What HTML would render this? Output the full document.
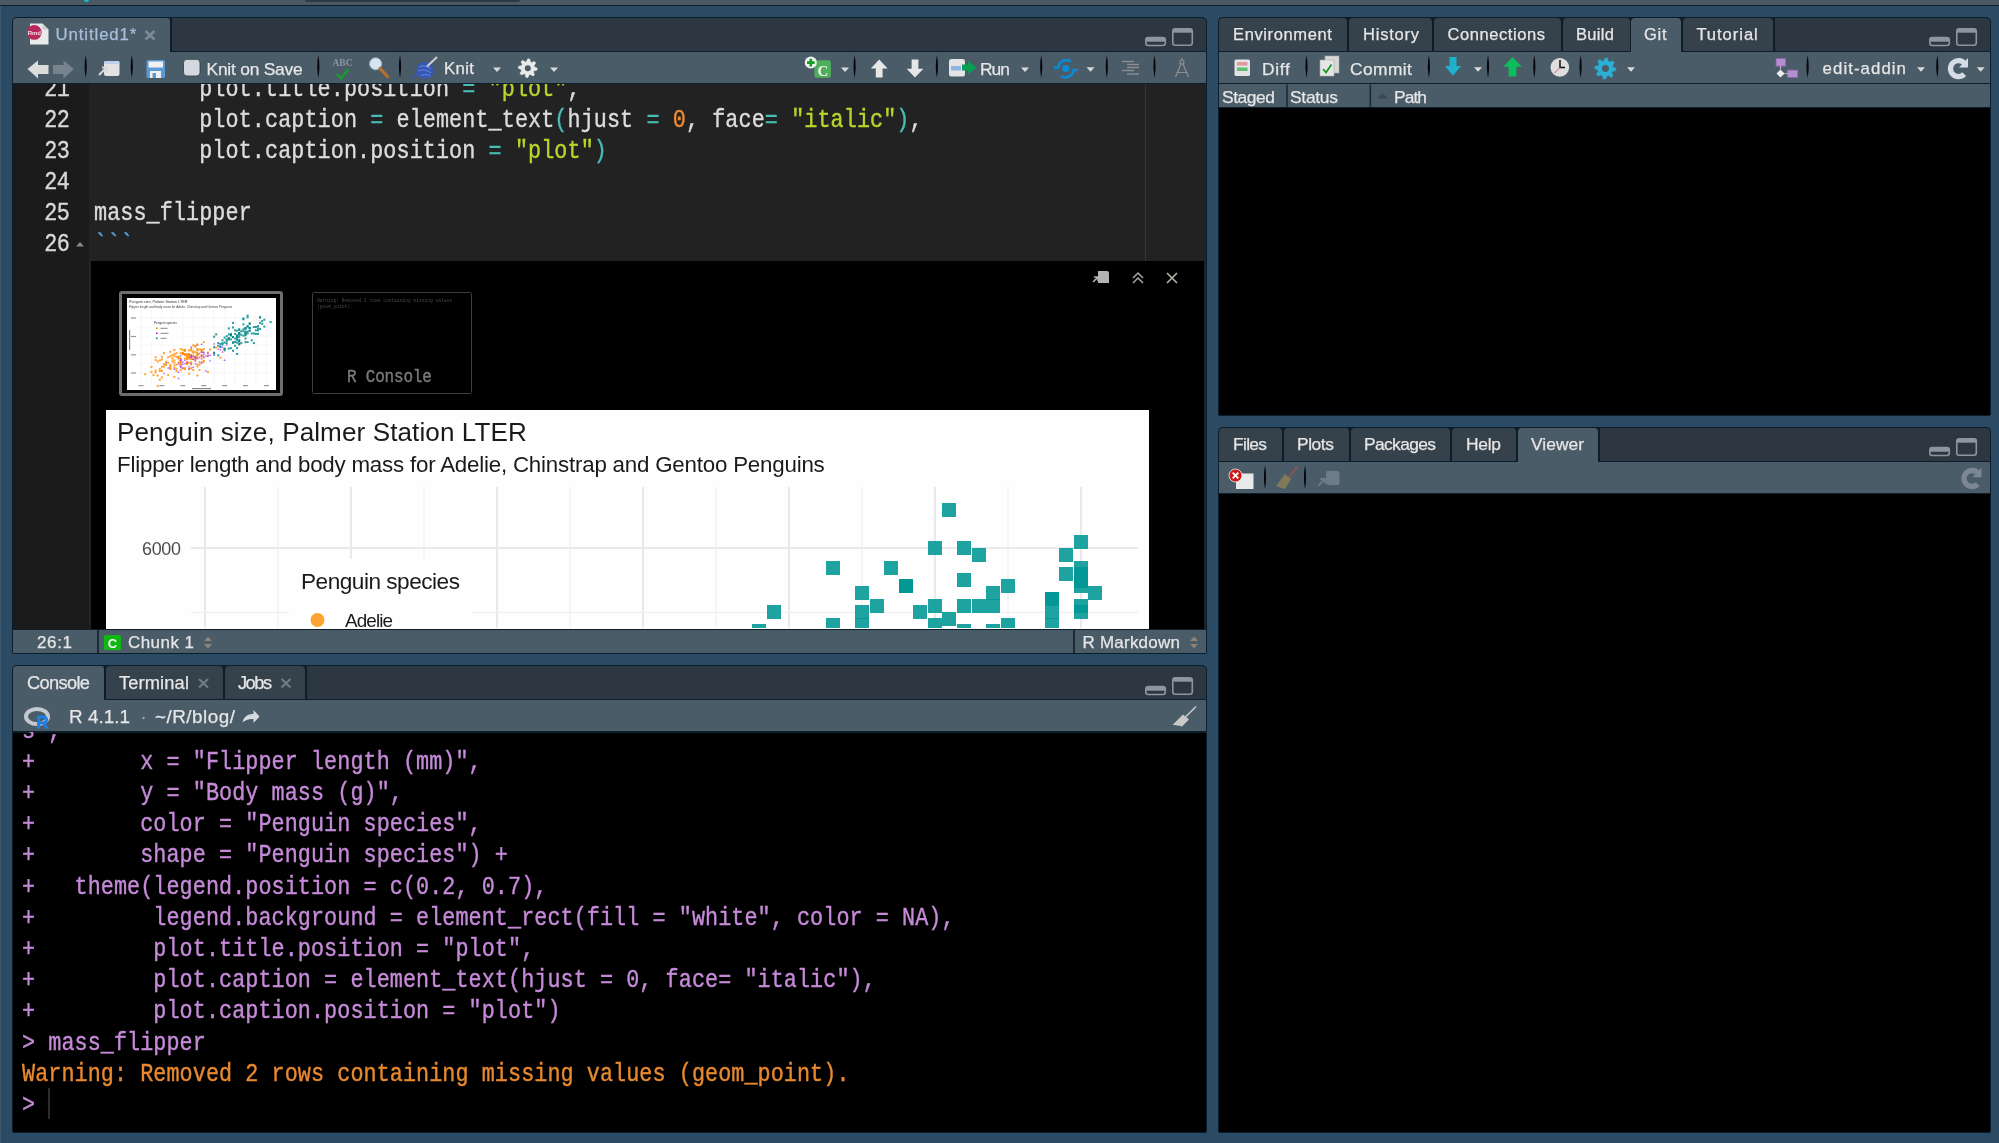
<!DOCTYPE html><html><head><meta charset="utf-8"><style>
*{margin:0;padding:0;box-sizing:border-box}
html,body{width:1999px;height:1143px;overflow:hidden;background:#2b4a63;font-family:"Liberation Sans",sans-serif;color:#e6e6e6}
.a{position:absolute}
.ui{font-size:16.5px;white-space:pre;line-height:20px}
.mono{font-family:"Liberation Mono",monospace;white-space:pre;-webkit-text-stroke:0.35px currentColor}
.sep{position:absolute;width:2px;background:#0d1a24;border-radius:1px}
.dd{position:absolute;width:0;height:0;border-left:4px solid transparent;border-right:4px solid transparent;border-top:4px solid #d8d8d8}
</style></head><body><div class="a" style="left:0;top:0;width:1999px;height:1143px;overflow:hidden;will-change:transform;background:#2b4a63"><div class="a" style="left:0px;top:6px;width:1px;height:1137px;background:#3d5a70;"></div>
<div class="a" style="left:0px;top:0px;width:1999px;height:5px;background:#4b5965;"></div>
<div class="a" style="left:0px;top:5px;width:1999px;height:1px;background:#0e1c28;"></div>
<div class="a" style="left:305px;top:0px;width:215px;height:1.5px;background:#2c3a46;border-radius:0 0 4px 4px"></div>
<div class="a" style="left:84px;top:0px;width:5px;height:1.5px;background:#22b5c8;border-radius:0 0 3px 3px"></div>
<div class="a" style="left:12px;top:17px;width:1195px;height:637px;background:#0c1d2c;border-radius:5px 5px 2px 2px"></div>
<div class="a" style="left:13px;top:18px;width:1193px;height:34px;background:#2d3741;border-radius:4px 4px 0 0"></div>
<div class="a" style="left:170px;top:18px;width:2px;height:34px;background:#0c1d2c;"></div>
<div class="a" style="left:13px;top:18px;width:157px;height:34px;background:#4b5c69;border-radius:4px 4px 0 0"></div>
<div class="a" style="left:13px;top:52px;width:1193px;height:31px;background:#4b5c69;"></div>
<div class="a" style="left:170px;top:51px;width:1036px;height:1px;background:#0c1d2c;"></div>
<div class="a" style="left:13px;top:84px;width:76px;height:545px;background:#1b1b1b;"></div>
<div class="a" style="left:89px;top:84px;width:1117px;height:545px;background:#222222;"></div>
<div class="a" style="left:1145px;top:84px;width:1px;height:177px;background:#363636;"></div>
<div class="a" style="left:91px;top:261px;width:1113px;height:367.6px;background:#000;"></div>
<div class="a" style="left:13px;top:630px;width:1193px;height:23px;background:#4b5c69;"></div>
<div class="a" style="left:13px;top:628.6px;width:1193px;height:1.8999999999999773px;background:#0c1d2c;"></div>
<div class="a" style="left:12px;top:665px;width:1195px;height:468px;background:#0c1d2c;border-radius:5px 5px 2px 2px"></div>
<div class="a" style="left:13px;top:666px;width:1193px;height:34px;background:#2d3741;border-radius:4px 4px 0 0"></div>
<div class="a" style="left:104px;top:666px;width:203px;height:34px;background:#0c1d2c;"></div>
<div class="a" style="left:13px;top:666px;width:91px;height:34px;background:#4b5c69;border-radius:4px 4px 0 0"></div>
<div class="a" style="left:106px;top:666px;width:117px;height:33px;background:#35414b;border-radius:4px 4px 0 0"></div>
<div class="a" style="left:225px;top:666px;width:80px;height:33px;background:#35414b;border-radius:4px 4px 0 0"></div>
<div class="a" style="left:13px;top:700px;width:1193px;height:31px;background:#4b5c69;"></div>
<div class="a" style="left:104px;top:699px;width:1102px;height:1px;background:#0c1d2c;"></div>
<div class="a" style="left:13px;top:732px;width:1193px;height:400px;background:#000;"></div>
<div class="a" style="left:13px;top:731px;width:1193px;height:1.7999999999999545px;background:#0c1d2c;"></div>
<div class="a" style="left:1218px;top:17px;width:773px;height:399px;background:#0c1d2c;border-radius:5px 5px 2px 2px"></div>
<div class="a" style="left:1219px;top:18px;width:771px;height:33px;background:#2d3741;border-radius:4px 4px 0 0"></div>
<div class="a" style="left:1219px;top:18px;width:556px;height:33px;background:#0c1d2c;"></div>
<div class="a" style="left:1219px;top:18px;width:128px;height:33px;background:#35414b;border-radius:4px 4px 0 0"></div>
<div class="a" style="left:1349px;top:18px;width:83px;height:33px;background:#35414b;border-radius:4px 4px 0 0"></div>
<div class="a" style="left:1434px;top:18px;width:127px;height:33px;background:#35414b;border-radius:4px 4px 0 0"></div>
<div class="a" style="left:1563px;top:18px;width:67px;height:33px;background:#35414b;border-radius:4px 4px 0 0"></div>
<div class="a" style="left:1683px;top:18px;width:90px;height:33px;background:#35414b;border-radius:4px 4px 0 0"></div>
<div class="a" style="left:1631px;top:18px;width:50px;height:34px;background:#4b5c69;border-radius:4px 4px 0 0"></div>
<div class="a" style="left:1219px;top:52px;width:771px;height:31px;background:#4b5c69;"></div>
<div class="a" style="left:1219px;top:51px;width:412px;height:1px;background:#0c1d2c;"></div>
<div class="a" style="left:1681px;top:51px;width:309px;height:1px;background:#0c1d2c;"></div>
<div class="a" style="left:1219px;top:84px;width:771px;height:23px;background:#4b5c69;"></div>
<div class="a" style="left:1219px;top:108px;width:771px;height:307px;background:#000;"></div>
<div class="a" style="left:1218px;top:427px;width:773px;height:706px;background:#0c1d2c;border-radius:5px 5px 2px 2px"></div>
<div class="a" style="left:1219px;top:428px;width:771px;height:33px;background:#2d3741;border-radius:4px 4px 0 0"></div>
<div class="a" style="left:1219px;top:428px;width:381px;height:33px;background:#0c1d2c;"></div>
<div class="a" style="left:1219px;top:428px;width:63px;height:33px;background:#35414b;border-radius:4px 4px 0 0"></div>
<div class="a" style="left:1284px;top:428px;width:65px;height:33px;background:#35414b;border-radius:4px 4px 0 0"></div>
<div class="a" style="left:1351px;top:428px;width:99px;height:33px;background:#35414b;border-radius:4px 4px 0 0"></div>
<div class="a" style="left:1452px;top:428px;width:64px;height:33px;background:#35414b;border-radius:4px 4px 0 0"></div>
<div class="a" style="left:1518px;top:428px;width:80px;height:34px;background:#4b5c69;border-radius:4px 4px 0 0"></div>
<div class="a" style="left:1219px;top:462px;width:771px;height:31px;background:#4b5c69;"></div>
<div class="a" style="left:1219px;top:461px;width:299px;height:1px;background:#0c1d2c;"></div>
<div class="a" style="left:1598px;top:461px;width:392px;height:1px;background:#0c1d2c;"></div>
<div class="a" style="left:1219px;top:494px;width:771px;height:638px;background:#000;"></div>
<div class="a" style="left:55.60px;top:26.67px;font-size:16.81px;line-height:16.81px;letter-spacing:0.880px;color:#a9bedb;white-space:pre;-webkit-text-stroke:0.25px currentColor">Untitled1*</div>
<div class="a" style="left:206.50px;top:60.97px;font-size:17.39px;line-height:17.39px;letter-spacing:-0.210px;color:#e6e6e6;white-space:pre;-webkit-text-stroke:0.25px currentColor">Knit on Save</div>
<div class="a" style="left:444.00px;top:60.97px;font-size:16.81px;line-height:16.81px;letter-spacing:0.333px;color:#e6e6e6;white-space:pre;-webkit-text-stroke:0.25px currentColor">Knit</div>
<div class="a" style="left:980.00px;top:61.17px;font-size:17.39px;line-height:17.39px;letter-spacing:-0.957px;color:#e6e6e6;white-space:pre;-webkit-text-stroke:0.25px currentColor">Run</div>
<div class="a" style="left:37.00px;top:635.24px;font-size:16.96px;line-height:16.96px;letter-spacing:0.673px;color:#e6e6e6;white-space:pre;-webkit-text-stroke:0.25px currentColor">26:1</div>
<div class="a" style="left:128.00px;top:635.24px;font-size:16.96px;line-height:16.96px;letter-spacing:0.473px;color:#e6e6e6;white-space:pre;-webkit-text-stroke:0.25px currentColor">Chunk 1</div>
<div class="a" style="left:1082.50px;top:635.04px;font-size:16.96px;line-height:16.96px;letter-spacing:0.254px;color:#e6e6e6;white-space:pre;-webkit-text-stroke:0.25px currentColor">R Markdown</div>
<div class="a" style="left:27.00px;top:674.44px;font-size:18.26px;line-height:18.26px;letter-spacing:-0.670px;color:#e6e6e6;white-space:pre;-webkit-text-stroke:0.25px currentColor">Console</div>
<div class="a" style="left:119.00px;top:674.44px;font-size:18.26px;line-height:18.26px;letter-spacing:0.139px;color:#e6e6e6;white-space:pre;-webkit-text-stroke:0.25px currentColor">Terminal</div>
<div class="a" style="left:238.00px;top:674.44px;font-size:18.26px;line-height:18.26px;letter-spacing:-1.510px;color:#e6e6e6;white-space:pre;-webkit-text-stroke:0.25px currentColor">Jobs</div>
<div class="a" style="left:69.00px;top:708.25px;font-size:18.84px;line-height:18.84px;letter-spacing:0.040px;color:#e6e6e6;white-space:pre;-webkit-text-stroke:0.25px currentColor">R 4.1.1</div>
<div class="a" style="left:155.00px;top:708.25px;font-size:18.84px;line-height:18.84px;letter-spacing:0.497px;color:#e6e6e6;white-space:pre;-webkit-text-stroke:0.25px currentColor">~/R/blog/</div>
<div class="a" style="left:1233.00px;top:27.31px;font-size:16.52px;line-height:16.52px;letter-spacing:0.623px;color:#e6e6e6;white-space:pre;-webkit-text-stroke:0.25px currentColor">Environment</div>
<div class="a" style="left:1363.00px;top:27.31px;font-size:16.52px;line-height:16.52px;letter-spacing:0.770px;color:#e6e6e6;white-space:pre;-webkit-text-stroke:0.25px currentColor">History</div>
<div class="a" style="left:1447.60px;top:27.31px;font-size:16.52px;line-height:16.52px;letter-spacing:0.554px;color:#e6e6e6;white-space:pre;-webkit-text-stroke:0.25px currentColor">Connections</div>
<div class="a" style="left:1576.00px;top:27.31px;font-size:16.52px;line-height:16.52px;letter-spacing:0.310px;color:#e6e6e6;white-space:pre;-webkit-text-stroke:0.25px currentColor">Build</div>
<div class="a" style="left:1644.00px;top:27.31px;font-size:16.52px;line-height:16.52px;letter-spacing:0.776px;color:#e6e6e6;white-space:pre;-webkit-text-stroke:0.25px currentColor">Git</div>
<div class="a" style="left:1696.40px;top:27.31px;font-size:16.52px;line-height:16.52px;letter-spacing:0.983px;color:#e6e6e6;white-space:pre;-webkit-text-stroke:0.25px currentColor">Tutorial</div>
<div class="a" style="left:1262.00px;top:60.57px;font-size:17.39px;line-height:17.39px;letter-spacing:0.725px;color:#e6e6e6;white-space:pre;-webkit-text-stroke:0.25px currentColor">Diff</div>
<div class="a" style="left:1350.00px;top:60.57px;font-size:17.39px;line-height:17.39px;letter-spacing:0.417px;color:#e6e6e6;white-space:pre;-webkit-text-stroke:0.25px currentColor">Commit</div>
<div class="a" style="left:1822.60px;top:61.07px;font-size:16.81px;line-height:16.81px;letter-spacing:1.066px;color:#e6e6e6;white-space:pre;-webkit-text-stroke:0.25px currentColor">edit-addin</div>
<div class="a" style="left:1222.00px;top:88.57px;font-size:17.39px;line-height:17.39px;letter-spacing:-0.426px;color:#e6e6e6;white-space:pre;-webkit-text-stroke:0.25px currentColor">Staged</div>
<div class="a" style="left:1290.00px;top:88.57px;font-size:17.39px;line-height:17.39px;letter-spacing:-0.261px;color:#e6e6e6;white-space:pre;-webkit-text-stroke:0.25px currentColor">Status</div>
<div class="a" style="left:1394.00px;top:88.57px;font-size:17.39px;line-height:17.39px;letter-spacing:-0.913px;color:#e6e6e6;white-space:pre;-webkit-text-stroke:0.25px currentColor">Path</div>
<div class="a" style="left:1233.00px;top:436.17px;font-size:17.39px;line-height:17.39px;letter-spacing:-0.674px;color:#e6e6e6;white-space:pre;-webkit-text-stroke:0.25px currentColor">Files</div>
<div class="a" style="left:1297.00px;top:436.17px;font-size:17.39px;line-height:17.39px;letter-spacing:-0.424px;color:#e6e6e6;white-space:pre;-webkit-text-stroke:0.25px currentColor">Plots</div>
<div class="a" style="left:1364.00px;top:436.17px;font-size:17.39px;line-height:17.39px;letter-spacing:-0.621px;color:#e6e6e6;white-space:pre;-webkit-text-stroke:0.25px currentColor">Packages</div>
<div class="a" style="left:1466.00px;top:436.17px;font-size:17.39px;line-height:17.39px;letter-spacing:-0.246px;color:#e6e6e6;white-space:pre;-webkit-text-stroke:0.25px currentColor">Help</div>
<div class="a" style="left:1531.00px;top:436.17px;font-size:17.39px;line-height:17.39px;letter-spacing:0.026px;color:#e6e6e6;white-space:pre;-webkit-text-stroke:0.25px currentColor">Viewer</div>
<div class="a" style="left:13px;top:84px;width:1193px;height:177px;overflow:hidden">
<div class="a mono" style="left:31.20px;top:-5.66px;font-size:21.75px;line-height:21.75px;letter-spacing:-0.550px;transform:scaleY(1.150);transform-origin:0 0;"><span style="color:#d8d8d8">21</span></div>
<div class="a mono" style="left:81.00px;top:-5.66px;font-size:21.75px;line-height:21.75px;letter-spacing:0.100px;transform:scaleY(1.150);transform-origin:0 0;"><span style="color:#dcdcdc">        plot.title.position </span><span style="color:#47bdb5">=</span><span style="color:#dcdcdc"> </span><span style="color:#bcd42a">"plot"</span><span style="color:#dcdcdc">,</span></div>
<div class="a mono" style="left:31.20px;top:25.34px;font-size:21.75px;line-height:21.75px;letter-spacing:-0.550px;transform:scaleY(1.150);transform-origin:0 0;"><span style="color:#d8d8d8">22</span></div>
<div class="a mono" style="left:81.00px;top:25.34px;font-size:21.75px;line-height:21.75px;letter-spacing:0.100px;transform:scaleY(1.150);transform-origin:0 0;"><span style="color:#dcdcdc">        plot.caption </span><span style="color:#47bdb5">=</span><span style="color:#dcdcdc"> element_text</span><span style="color:#47bdb5">(</span><span style="color:#dcdcdc">hjust </span><span style="color:#47bdb5">=</span><span style="color:#dcdcdc"> </span><span style="color:#ee8c33">0</span><span style="color:#dcdcdc">, face</span><span style="color:#47bdb5">=</span><span style="color:#dcdcdc"> </span><span style="color:#bcd42a">"italic"</span><span style="color:#47bdb5">)</span><span style="color:#dcdcdc">,</span></div>
<div class="a mono" style="left:31.20px;top:56.34px;font-size:21.75px;line-height:21.75px;letter-spacing:-0.550px;transform:scaleY(1.150);transform-origin:0 0;"><span style="color:#d8d8d8">23</span></div>
<div class="a mono" style="left:81.00px;top:56.34px;font-size:21.75px;line-height:21.75px;letter-spacing:0.100px;transform:scaleY(1.150);transform-origin:0 0;"><span style="color:#dcdcdc">        plot.caption.position </span><span style="color:#47bdb5">=</span><span style="color:#dcdcdc"> </span><span style="color:#bcd42a">"plot"</span><span style="color:#47bdb5">)</span></div>
<div class="a mono" style="left:31.20px;top:87.34px;font-size:21.75px;line-height:21.75px;letter-spacing:-0.550px;transform:scaleY(1.150);transform-origin:0 0;"><span style="color:#d8d8d8">24</span></div>
<div class="a mono" style="left:31.20px;top:118.34px;font-size:21.75px;line-height:21.75px;letter-spacing:-0.550px;transform:scaleY(1.150);transform-origin:0 0;"><span style="color:#d8d8d8">25</span></div>
<div class="a mono" style="left:81.00px;top:118.34px;font-size:21.75px;line-height:21.75px;letter-spacing:0.100px;transform:scaleY(1.150);transform-origin:0 0;"><span style="color:#dcdcdc">mass_flipper</span></div>
<div class="a mono" style="left:31.20px;top:149.34px;font-size:21.75px;line-height:21.75px;letter-spacing:-0.550px;transform:scaleY(1.150);transform-origin:0 0;"><span style="color:#d8d8d8">26</span></div>
<div class="a mono" style="left:81.00px;top:149.34px;font-size:21.75px;line-height:21.75px;letter-spacing:0.100px;transform:scaleY(1.150);transform-origin:0 0;"><span style="color:#5a9fd4">```</span></div>
</div>
<div class="a" style="left:13px;top:732px;width:1193px;height:400px;overflow:hidden">
<div class="a mono" style="left:9.00px;top:-12.36px;font-size:21.75px;line-height:21.75px;letter-spacing:0.083px;transform:scaleY(1.150);transform-origin:0 0;"><span style="color:#c58ad8">s",</span></div>
<div class="a mono" style="left:9.00px;top:18.84px;font-size:21.75px;line-height:21.75px;letter-spacing:0.083px;transform:scaleY(1.150);transform-origin:0 0;"><span style="color:#c58ad8">+        x = "Flipper length (mm)",</span></div>
<div class="a mono" style="left:9.00px;top:50.04px;font-size:21.75px;line-height:21.75px;letter-spacing:0.083px;transform:scaleY(1.150);transform-origin:0 0;"><span style="color:#c58ad8">+        y = "Body mass (g)",</span></div>
<div class="a mono" style="left:9.00px;top:81.24px;font-size:21.75px;line-height:21.75px;letter-spacing:0.083px;transform:scaleY(1.150);transform-origin:0 0;"><span style="color:#c58ad8">+        color = "Penguin species",</span></div>
<div class="a mono" style="left:9.00px;top:112.44px;font-size:21.75px;line-height:21.75px;letter-spacing:0.083px;transform:scaleY(1.150);transform-origin:0 0;"><span style="color:#c58ad8">+        shape = "Penguin species") +</span></div>
<div class="a mono" style="left:9.00px;top:143.64px;font-size:21.75px;line-height:21.75px;letter-spacing:0.083px;transform:scaleY(1.150);transform-origin:0 0;"><span style="color:#c58ad8">+   theme(legend.position = c(0.2, 0.7),</span></div>
<div class="a mono" style="left:9.00px;top:174.84px;font-size:21.75px;line-height:21.75px;letter-spacing:0.083px;transform:scaleY(1.150);transform-origin:0 0;"><span style="color:#c58ad8">+         legend.background = element_rect(fill = "white", color = NA),</span></div>
<div class="a mono" style="left:9.00px;top:206.04px;font-size:21.75px;line-height:21.75px;letter-spacing:0.083px;transform:scaleY(1.150);transform-origin:0 0;"><span style="color:#c58ad8">+         plot.title.position = "plot",</span></div>
<div class="a mono" style="left:9.00px;top:237.24px;font-size:21.75px;line-height:21.75px;letter-spacing:0.083px;transform:scaleY(1.150);transform-origin:0 0;"><span style="color:#c58ad8">+         plot.caption = element_text(hjust = 0, face= "italic"),</span></div>
<div class="a mono" style="left:9.00px;top:268.44px;font-size:21.75px;line-height:21.75px;letter-spacing:0.083px;transform:scaleY(1.150);transform-origin:0 0;"><span style="color:#c58ad8">+         plot.caption.position = "plot")</span></div>
<div class="a mono" style="left:9.00px;top:299.64px;font-size:21.75px;line-height:21.75px;letter-spacing:0.083px;transform:scaleY(1.150);transform-origin:0 0;"><span style="color:#c58ad8">&gt; mass_flipper</span></div>
<div class="a mono" style="left:9.00px;top:330.84px;font-size:21.75px;line-height:21.75px;letter-spacing:0.083px;transform:scaleY(1.150);transform-origin:0 0;"><span style="color:#e8892f">Warning: Removed 2 rows containing missing values (geom_point).</span></div>
<div class="a mono" style="left:9.00px;top:362.04px;font-size:21.75px;line-height:21.75px;letter-spacing:0.083px;transform:scaleY(1.150);transform-origin:0 0;"><span style="color:#c58ad8">&gt; </span></div>
<div class="a" style="left:34.5px;top:356px;width:2.5px;height:31px;background:#2c2c2c;"></div>
</div>
<div class="a" style="left:119px;top:291px;width:164px;height:105px;background:#6e6e6e;border-radius:3px"></div>
<div class="a" style="left:122px;top:294px;width:158px;height:99px;background:#000;"></div>
<div class="a" style="left:127px;top:298px;width:149px;height:92px;background:#fff;"></div>
<div class="a" style="left:312px;top:292px;width:160px;height:102px;background:#3e3e3e;border-radius:3px"></div>
<div class="a" style="left:313px;top:293px;width:158px;height:100px;background:#000;"></div>
<div class="a mono" style="left:347px;top:367.8px;font-size:16px;line-height:16px;letter-spacing:-0.2px;transform:scaleY(1.2);transform-origin:0 0;color:#7a7a7a">R Console</div>
<div class="a mono" style="left:317px;top:298px;font-size:4.6px;line-height:6px;color:#484848;-webkit-text-stroke:0">Warning: Removed 2 rows containing missing values<br>(geom_point).</div>
<svg class="a" style="left:1090px;top:268px" width="95" height="20" viewBox="0 0 95 20"><path d="M8 3h9a2 2 0 0 1 2 2v10h-11z" fill="#b4b4b4"/><path d="M3 14l5-5M4 9h4v4" stroke="#b4b4b4" stroke-width="1.6" fill="none"/><path d="M43 10l5-5 5 5M43 15l5-5 5 5" stroke="#a8a8a8" stroke-width="1.5" fill="none"/><path d="M77 5l10 10M87 5l-10 10" stroke="#b8b4a8" stroke-width="1.6"/></svg>
<div class="a" style="left:106px;top:410px;width:1043px;height:218.60000000000002px;background:#fefefe;"></div>
<svg class="a" style="left:106px;top:410px" width="1043" height="218" viewBox="106 410 1043 218"><line x1="205" y1="487" x2="205" y2="629" stroke="#e9e9e9" stroke-width="2"/><line x1="278" y1="487" x2="278" y2="629" stroke="#f1f1f1" stroke-width="1.4"/><line x1="351" y1="487" x2="351" y2="629" stroke="#e9e9e9" stroke-width="2"/><line x1="424" y1="487" x2="424" y2="629" stroke="#f1f1f1" stroke-width="1.4"/><line x1="497" y1="487" x2="497" y2="629" stroke="#e9e9e9" stroke-width="2"/><line x1="570" y1="487" x2="570" y2="629" stroke="#f1f1f1" stroke-width="1.4"/><line x1="643" y1="487" x2="643" y2="629" stroke="#e9e9e9" stroke-width="2"/><line x1="716" y1="487" x2="716" y2="629" stroke="#f1f1f1" stroke-width="1.4"/><line x1="789" y1="487" x2="789" y2="629" stroke="#e9e9e9" stroke-width="2"/><line x1="862" y1="487" x2="862" y2="629" stroke="#f1f1f1" stroke-width="1.4"/><line x1="935" y1="487" x2="935" y2="629" stroke="#e9e9e9" stroke-width="2"/><line x1="1008" y1="487" x2="1008" y2="629" stroke="#f1f1f1" stroke-width="1.4"/><line x1="1081" y1="487" x2="1081" y2="629" stroke="#e9e9e9" stroke-width="2"/><line x1="191" y1="548" x2="1138" y2="548" stroke="#eaeaea" stroke-width="2"/><line x1="191" y1="612.5" x2="1138" y2="612.5" stroke="#f1f1f1" stroke-width="1.4"/><rect x="289" y="559" width="183" height="80" fill="#fefefe"/><rect x="752" y="624" width="14" height="14" fill="rgb(0,150,148)" fill-opacity="0.88"/><rect x="767" y="605" width="14" height="14" fill="rgb(0,150,148)" fill-opacity="0.88"/><rect x="826" y="561" width="14" height="14" fill="rgb(0,150,148)" fill-opacity="0.88"/><rect x="826" y="618" width="14" height="14" fill="rgb(0,150,148)" fill-opacity="0.88"/><rect x="855" y="586" width="14" height="14" fill="rgb(0,150,148)" fill-opacity="0.88"/><rect x="855" y="605" width="14" height="14" fill="rgb(0,150,148)" fill-opacity="0.88"/><rect x="855" y="618" width="14" height="14" fill="rgb(0,150,148)" fill-opacity="0.88"/><rect x="870" y="599" width="14" height="14" fill="rgb(0,150,148)" fill-opacity="0.88"/><rect x="884" y="561" width="14" height="14" fill="rgb(0,150,148)" fill-opacity="0.88"/><rect x="899" y="579" width="14" height="14" fill="rgb(0,150,148)" fill-opacity="0.88"/><rect x="913" y="605" width="14" height="14" fill="rgb(0,150,148)" fill-opacity="0.88"/><rect x="928" y="541" width="14" height="14" fill="rgb(0,150,148)" fill-opacity="0.88"/><rect x="928" y="599" width="14" height="14" fill="rgb(0,150,148)" fill-opacity="0.88"/><rect x="928" y="618" width="14" height="14" fill="rgb(0,150,148)" fill-opacity="0.88"/><rect x="942" y="503" width="14" height="14" fill="rgb(0,150,148)" fill-opacity="0.88"/><rect x="957" y="541" width="14" height="14" fill="rgb(0,150,148)" fill-opacity="0.88"/><rect x="972" y="548" width="14" height="14" fill="rgb(0,150,148)" fill-opacity="0.88"/><rect x="957" y="573" width="14" height="14" fill="rgb(0,150,148)" fill-opacity="0.88"/><rect x="986" y="586" width="14" height="14" fill="rgb(0,150,148)" fill-opacity="0.88"/><rect x="1001" y="579" width="14" height="14" fill="rgb(0,150,148)" fill-opacity="0.88"/><rect x="957" y="599" width="14" height="14" fill="rgb(0,150,148)" fill-opacity="0.88"/><rect x="972" y="599" width="14" height="14" fill="rgb(0,150,148)" fill-opacity="0.88"/><rect x="986" y="599" width="14" height="14" fill="rgb(0,150,148)" fill-opacity="0.88"/><rect x="942" y="612" width="14" height="14" fill="rgb(0,150,148)" fill-opacity="0.88"/><rect x="957" y="624" width="14" height="14" fill="rgb(0,150,148)" fill-opacity="0.88"/><rect x="986" y="624" width="14" height="14" fill="rgb(0,150,148)" fill-opacity="0.88"/><rect x="1001" y="618" width="14" height="14" fill="rgb(0,150,148)" fill-opacity="0.88"/><rect x="1045" y="592" width="14" height="14" fill="rgb(0,150,148)" fill-opacity="0.88"/><rect x="1045" y="592" width="14" height="14" fill="rgb(0,150,148)" fill-opacity="0.88"/><rect x="1045" y="605" width="14" height="14" fill="rgb(0,150,148)" fill-opacity="0.88"/><rect x="1045" y="618" width="14" height="14" fill="rgb(0,150,148)" fill-opacity="0.88"/><rect x="899" y="579" width="14" height="14" fill="rgb(0,150,148)" fill-opacity="0.88"/><rect x="1059" y="548" width="14" height="14" fill="rgb(0,150,148)" fill-opacity="0.88"/><rect x="1059" y="567" width="14" height="14" fill="rgb(0,150,148)" fill-opacity="0.88"/><rect x="1074" y="535" width="14" height="14" fill="rgb(0,150,148)" fill-opacity="0.88"/><rect x="1074" y="561" width="14" height="14" fill="rgb(0,150,148)" fill-opacity="0.88"/><rect x="1074" y="567" width="14" height="14" fill="rgb(0,150,148)" fill-opacity="0.88"/><rect x="1074" y="579" width="14" height="14" fill="rgb(0,150,148)" fill-opacity="0.88"/><rect x="1088" y="586" width="14" height="14" fill="rgb(0,150,148)" fill-opacity="0.88"/><rect x="1074" y="599" width="14" height="14" fill="rgb(0,150,148)" fill-opacity="0.88"/><rect x="1074" y="605" width="14" height="14" fill="rgb(0,150,148)" fill-opacity="0.88"/><rect x="1074" y="574" width="14" height="14" fill="rgb(0,150,148)" fill-opacity="0.88"/><circle cx="317.5" cy="620" r="7" fill="#ff8c00" fill-opacity="0.8"/></svg>
<div class="a" style="left:117.00px;top:418.81px;font-size:26.09px;line-height:26.09px;letter-spacing:0.095px;color:#1a1a1a;white-space:pre;">Penguin size, Palmer Station LTER</div>
<div class="a" style="left:117.00px;top:454.00px;font-size:22.32px;line-height:22.32px;letter-spacing:-0.205px;color:#1a1a1a;white-space:pre;">Flipper length and body mass for Adelie, Chinstrap and Gentoo Penguins</div>
<div class="a" style="left:142.00px;top:540.68px;font-size:17.97px;line-height:17.97px;letter-spacing:-0.329px;color:#4d4d4d;white-space:pre;">6000</div>
<div class="a" style="left:301.00px;top:571.36px;font-size:22.61px;line-height:22.61px;letter-spacing:-0.496px;color:#1a1a1a;white-space:pre;">Penguin species</div>
<div class="a" style="left:345.00px;top:611.95px;font-size:18.84px;line-height:18.84px;letter-spacing:-0.875px;color:#1a1a1a;white-space:pre;">Adelie</div>
<svg class="a" style="left:127px;top:298px" width="149" height="92" viewBox="127 298 149 92"><line x1="141.0" y1="309" x2="141.0" y2="384" stroke="#ececec" stroke-width="0.35"/><line x1="151.4" y1="309" x2="151.4" y2="384" stroke="#ececec" stroke-width="0.5"/><line x1="161.9" y1="309" x2="161.9" y2="384" stroke="#ececec" stroke-width="0.35"/><line x1="172.3" y1="309" x2="172.3" y2="384" stroke="#ececec" stroke-width="0.5"/><line x1="182.8" y1="309" x2="182.8" y2="384" stroke="#ececec" stroke-width="0.35"/><line x1="193.2" y1="309" x2="193.2" y2="384" stroke="#ececec" stroke-width="0.5"/><line x1="203.7" y1="309" x2="203.7" y2="384" stroke="#ececec" stroke-width="0.35"/><line x1="214.1" y1="309" x2="214.1" y2="384" stroke="#ececec" stroke-width="0.5"/><line x1="224.6" y1="309" x2="224.6" y2="384" stroke="#ececec" stroke-width="0.35"/><line x1="235.1" y1="309" x2="235.1" y2="384" stroke="#ececec" stroke-width="0.5"/><line x1="245.5" y1="309" x2="245.5" y2="384" stroke="#ececec" stroke-width="0.35"/><line x1="255.9" y1="309" x2="255.9" y2="384" stroke="#ececec" stroke-width="0.5"/><line x1="266.4" y1="309" x2="266.4" y2="384" stroke="#ececec" stroke-width="0.35"/><line x1="137" y1="317.9" x2="272" y2="317.9" stroke="#ececec" stroke-width="0.4"/><line x1="137" y1="327.0" x2="272" y2="327.0" stroke="#ececec" stroke-width="0.4"/><line x1="137" y1="336.2" x2="272" y2="336.2" stroke="#ececec" stroke-width="0.4"/><line x1="137" y1="345.3" x2="272" y2="345.3" stroke="#ececec" stroke-width="0.4"/><line x1="137" y1="354.5" x2="272" y2="354.5" stroke="#ececec" stroke-width="0.4"/><line x1="137" y1="363.6" x2="272" y2="363.6" stroke="#ececec" stroke-width="0.4"/><line x1="137" y1="372.8" x2="272" y2="372.8" stroke="#ececec" stroke-width="0.4"/><rect x="177.6" y="356.2" width="2" height="2" fill="#ff8c00" fill-opacity="0.8"/><rect x="179.7" y="362.2" width="2" height="2" fill="#ff8c00" fill-opacity="0.8"/><rect x="169.3" y="364.0" width="2" height="2" fill="#ff8c00" fill-opacity="0.8"/><rect x="196.4" y="351.7" width="2" height="2" fill="#ff8c00" fill-opacity="0.8"/><rect x="196.4" y="353.0" width="2" height="2" fill="#ff8c00" fill-opacity="0.8"/><rect x="188.1" y="356.2" width="2" height="2" fill="#ff8c00" fill-opacity="0.8"/><rect x="158.8" y="359.4" width="2" height="2" fill="#ff8c00" fill-opacity="0.8"/><rect x="188.1" y="353.5" width="2" height="2" fill="#ff8c00" fill-opacity="0.8"/><rect x="158.8" y="378.7" width="2" height="2" fill="#ff8c00" fill-opacity="0.8"/><rect x="169.3" y="365.9" width="2" height="2" fill="#ff8c00" fill-opacity="0.8"/><rect x="186.0" y="358.1" width="2" height="2" fill="#ff8c00" fill-opacity="0.8"/><rect x="188.1" y="361.7" width="2" height="2" fill="#ff8c00" fill-opacity="0.8"/><rect x="186.0" y="354.9" width="2" height="2" fill="#ff8c00" fill-opacity="0.8"/><rect x="173.4" y="348.9" width="2" height="2" fill="#ff8c00" fill-opacity="0.8"/><rect x="190.2" y="348.0" width="2" height="2" fill="#ff8c00" fill-opacity="0.8"/><rect x="173.4" y="366.8" width="2" height="2" fill="#ff8c00" fill-opacity="0.8"/><rect x="177.6" y="361.3" width="2" height="2" fill="#ff8c00" fill-opacity="0.8"/><rect x="190.2" y="354.9" width="2" height="2" fill="#ff8c00" fill-opacity="0.8"/><rect x="175.5" y="367.7" width="2" height="2" fill="#ff8c00" fill-opacity="0.8"/><rect x="175.5" y="352.1" width="2" height="2" fill="#ff8c00" fill-opacity="0.8"/><rect x="171.3" y="360.4" width="2" height="2" fill="#ff8c00" fill-opacity="0.8"/><rect x="188.1" y="368.1" width="2" height="2" fill="#ff8c00" fill-opacity="0.8"/><rect x="181.8" y="348.9" width="2" height="2" fill="#ff8c00" fill-opacity="0.8"/><rect x="154.6" y="369.5" width="2" height="2" fill="#ff8c00" fill-opacity="0.8"/><rect x="179.7" y="365.4" width="2" height="2" fill="#ff8c00" fill-opacity="0.8"/><rect x="188.1" y="357.6" width="2" height="2" fill="#ff8c00" fill-opacity="0.8"/><rect x="160.9" y="358.5" width="2" height="2" fill="#ff8c00" fill-opacity="0.8"/><rect x="190.2" y="349.4" width="2" height="2" fill="#ff8c00" fill-opacity="0.8"/><rect x="200.6" y="350.8" width="2" height="2" fill="#ff8c00" fill-opacity="0.8"/><rect x="183.9" y="368.1" width="2" height="2" fill="#ff8c00" fill-opacity="0.8"/><rect x="190.2" y="361.3" width="2" height="2" fill="#ff8c00" fill-opacity="0.8"/><rect x="175.5" y="370.0" width="2" height="2" fill="#ff8c00" fill-opacity="0.8"/><rect x="169.3" y="366.8" width="2" height="2" fill="#ff8c00" fill-opacity="0.8"/><rect x="198.5" y="369.1" width="2" height="2" fill="#ff8c00" fill-opacity="0.8"/><rect x="163.0" y="363.1" width="2" height="2" fill="#ff8c00" fill-opacity="0.8"/><rect x="200.6" y="348.9" width="2" height="2" fill="#ff8c00" fill-opacity="0.8"/><rect x="156.7" y="385.1" width="2" height="2" fill="#ff8c00" fill-opacity="0.8"/><rect x="186.0" y="363.1" width="2" height="2" fill="#ff8c00" fill-opacity="0.8"/><rect x="167.2" y="356.2" width="2" height="2" fill="#ff8c00" fill-opacity="0.8"/><rect x="196.4" y="353.5" width="2" height="2" fill="#ff8c00" fill-opacity="0.8"/><rect x="186.0" y="354.9" width="2" height="2" fill="#ff8c00" fill-opacity="0.8"/><rect x="202.7" y="348.0" width="2" height="2" fill="#ff8c00" fill-opacity="0.8"/><rect x="188.1" y="353.0" width="2" height="2" fill="#ff8c00" fill-opacity="0.8"/><rect x="160.9" y="355.8" width="2" height="2" fill="#ff8c00" fill-opacity="0.8"/><rect x="194.3" y="351.2" width="2" height="2" fill="#ff8c00" fill-opacity="0.8"/><rect x="154.6" y="371.3" width="2" height="2" fill="#ff8c00" fill-opacity="0.8"/><rect x="192.2" y="369.1" width="2" height="2" fill="#ff8c00" fill-opacity="0.8"/><rect x="179.7" y="352.1" width="2" height="2" fill="#ff8c00" fill-opacity="0.8"/><rect x="163.0" y="352.1" width="2" height="2" fill="#ff8c00" fill-opacity="0.8"/><rect x="190.2" y="358.1" width="2" height="2" fill="#ff8c00" fill-opacity="0.8"/><rect x="186.0" y="353.0" width="2" height="2" fill="#ff8c00" fill-opacity="0.8"/><rect x="183.9" y="349.8" width="2" height="2" fill="#ff8c00" fill-opacity="0.8"/><rect x="173.4" y="364.5" width="2" height="2" fill="#ff8c00" fill-opacity="0.8"/><rect x="196.4" y="354.9" width="2" height="2" fill="#ff8c00" fill-opacity="0.8"/><rect x="169.3" y="355.3" width="2" height="2" fill="#ff8c00" fill-opacity="0.8"/><rect x="202.7" y="356.7" width="2" height="2" fill="#ff8c00" fill-opacity="0.8"/><rect x="163.0" y="365.4" width="2" height="2" fill="#ff8c00" fill-opacity="0.8"/><rect x="179.7" y="361.7" width="2" height="2" fill="#ff8c00" fill-opacity="0.8"/><rect x="200.6" y="361.3" width="2" height="2" fill="#ff8c00" fill-opacity="0.8"/><rect x="198.5" y="363.6" width="2" height="2" fill="#ff8c00" fill-opacity="0.8"/><rect x="171.3" y="357.6" width="2" height="2" fill="#ff8c00" fill-opacity="0.8"/><rect x="196.4" y="348.0" width="2" height="2" fill="#ff8c00" fill-opacity="0.8"/><rect x="186.0" y="356.7" width="2" height="2" fill="#ff8c00" fill-opacity="0.8"/><rect x="183.9" y="354.0" width="2" height="2" fill="#ff8c00" fill-opacity="0.8"/><rect x="179.7" y="357.6" width="2" height="2" fill="#ff8c00" fill-opacity="0.8"/><rect x="190.2" y="356.7" width="2" height="2" fill="#ff8c00" fill-opacity="0.8"/><rect x="192.2" y="351.7" width="2" height="2" fill="#ff8c00" fill-opacity="0.8"/><rect x="209.0" y="348.5" width="2" height="2" fill="#ff8c00" fill-opacity="0.8"/><rect x="175.5" y="363.6" width="2" height="2" fill="#ff8c00" fill-opacity="0.8"/><rect x="181.8" y="352.1" width="2" height="2" fill="#ff8c00" fill-opacity="0.8"/><rect x="177.6" y="357.6" width="2" height="2" fill="#ff8c00" fill-opacity="0.8"/><rect x="206.9" y="370.9" width="2" height="2" fill="#ff8c00" fill-opacity="0.8"/><rect x="167.2" y="361.7" width="2" height="2" fill="#ff8c00" fill-opacity="0.8"/><rect x="188.1" y="355.8" width="2" height="2" fill="#ff8c00" fill-opacity="0.8"/><rect x="175.5" y="355.8" width="2" height="2" fill="#ff8c00" fill-opacity="0.8"/><rect x="186.0" y="361.7" width="2" height="2" fill="#ff8c00" fill-opacity="0.8"/><rect x="215.2" y="346.6" width="2" height="2" fill="#ff8c00" fill-opacity="0.8"/><rect x="173.4" y="361.7" width="2" height="2" fill="#ff8c00" fill-opacity="0.8"/><rect x="179.7" y="360.4" width="2" height="2" fill="#ff8c00" fill-opacity="0.8"/><rect x="144.2" y="373.2" width="2" height="2" fill="#ff8c00" fill-opacity="0.8"/><rect x="196.4" y="363.6" width="2" height="2" fill="#ff8c00" fill-opacity="0.8"/><rect x="181.8" y="352.1" width="2" height="2" fill="#ff8c00" fill-opacity="0.8"/><rect x="194.3" y="344.8" width="2" height="2" fill="#ff8c00" fill-opacity="0.8"/><rect x="158.8" y="368.1" width="2" height="2" fill="#ff8c00" fill-opacity="0.8"/><rect x="177.6" y="355.8" width="2" height="2" fill="#ff8c00" fill-opacity="0.8"/><rect x="196.4" y="374.5" width="2" height="2" fill="#ff8c00" fill-opacity="0.8"/><rect x="196.4" y="365.4" width="2" height="2" fill="#ff8c00" fill-opacity="0.8"/><rect x="190.2" y="367.2" width="2" height="2" fill="#ff8c00" fill-opacity="0.8"/><rect x="183.9" y="349.4" width="2" height="2" fill="#ff8c00" fill-opacity="0.8"/><rect x="179.7" y="358.1" width="2" height="2" fill="#ff8c00" fill-opacity="0.8"/><rect x="192.2" y="354.9" width="2" height="2" fill="#ff8c00" fill-opacity="0.8"/><rect x="179.7" y="348.0" width="2" height="2" fill="#ff8c00" fill-opacity="0.8"/><rect x="196.4" y="357.2" width="2" height="2" fill="#ff8c00" fill-opacity="0.8"/><rect x="219.4" y="356.7" width="2" height="2" fill="#ff8c00" fill-opacity="0.8"/><rect x="194.3" y="357.2" width="2" height="2" fill="#ff8c00" fill-opacity="0.8"/><rect x="183.9" y="353.0" width="2" height="2" fill="#ff8c00" fill-opacity="0.8"/><rect x="183.9" y="353.5" width="2" height="2" fill="#ff8c00" fill-opacity="0.8"/><rect x="160.9" y="376.4" width="2" height="2" fill="#ff8c00" fill-opacity="0.8"/><rect x="190.2" y="363.6" width="2" height="2" fill="#ff8c00" fill-opacity="0.8"/><rect x="167.2" y="374.1" width="2" height="2" fill="#ff8c00" fill-opacity="0.8"/><rect x="198.5" y="348.5" width="2" height="2" fill="#ff8c00" fill-opacity="0.8"/><rect x="202.7" y="359.9" width="2" height="2" fill="#ff8c00" fill-opacity="0.8"/><rect x="181.8" y="367.2" width="2" height="2" fill="#ff8c00" fill-opacity="0.8"/><rect x="192.2" y="344.3" width="2" height="2" fill="#ff8c00" fill-opacity="0.8"/><rect x="169.3" y="350.8" width="2" height="2" fill="#ff8c00" fill-opacity="0.8"/><rect x="194.3" y="356.2" width="2" height="2" fill="#ff8c00" fill-opacity="0.8"/><rect x="154.6" y="356.2" width="2" height="2" fill="#ff8c00" fill-opacity="0.8"/><rect x="179.7" y="364.0" width="2" height="2" fill="#ff8c00" fill-opacity="0.8"/><rect x="188.1" y="354.4" width="2" height="2" fill="#ff8c00" fill-opacity="0.8"/><rect x="202.7" y="360.8" width="2" height="2" fill="#ff8c00" fill-opacity="0.8"/><rect x="196.4" y="343.4" width="2" height="2" fill="#ff8c00" fill-opacity="0.8"/><rect x="200.6" y="354.4" width="2" height="2" fill="#ff8c00" fill-opacity="0.8"/><rect x="171.3" y="354.4" width="2" height="2" fill="#ff8c00" fill-opacity="0.8"/><rect x="183.9" y="357.6" width="2" height="2" fill="#ff8c00" fill-opacity="0.8"/><rect x="200.6" y="355.3" width="2" height="2" fill="#ff8c00" fill-opacity="0.8"/><rect x="150.4" y="370.9" width="2" height="2" fill="#ff8c00" fill-opacity="0.8"/><rect x="156.7" y="360.4" width="2" height="2" fill="#ff8c00" fill-opacity="0.8"/><rect x="186.0" y="362.2" width="2" height="2" fill="#ff8c00" fill-opacity="0.8"/><rect x="181.8" y="353.0" width="2" height="2" fill="#ff8c00" fill-opacity="0.8"/><rect x="183.9" y="348.9" width="2" height="2" fill="#ff8c00" fill-opacity="0.8"/><rect x="181.8" y="351.7" width="2" height="2" fill="#ff8c00" fill-opacity="0.8"/><rect x="202.7" y="341.1" width="2" height="2" fill="#ff8c00" fill-opacity="0.8"/><rect x="173.4" y="355.3" width="2" height="2" fill="#ff8c00" fill-opacity="0.8"/><rect x="156.7" y="374.5" width="2" height="2" fill="#ff8c00" fill-opacity="0.8"/><rect x="154.6" y="359.0" width="2" height="2" fill="#ff8c00" fill-opacity="0.8"/><rect x="165.1" y="364.0" width="2" height="2" fill="#ff8c00" fill-opacity="0.8"/><rect x="179.7" y="359.9" width="2" height="2" fill="#ff8c00" fill-opacity="0.8"/><rect x="173.4" y="359.4" width="2" height="2" fill="#ff8c00" fill-opacity="0.8"/><rect x="206.9" y="351.7" width="2" height="2" fill="#ff8c00" fill-opacity="0.8"/><rect x="188.1" y="349.4" width="2" height="2" fill="#ff8c00" fill-opacity="0.8"/><rect x="179.7" y="369.1" width="2" height="2" fill="#ff8c00" fill-opacity="0.8"/><rect x="173.4" y="353.0" width="2" height="2" fill="#ff8c00" fill-opacity="0.8"/><rect x="158.8" y="370.0" width="2" height="2" fill="#ff8c00" fill-opacity="0.8"/><rect x="196.4" y="349.4" width="2" height="2" fill="#ff8c00" fill-opacity="0.8"/><rect x="181.8" y="353.0" width="2" height="2" fill="#ff8c00" fill-opacity="0.8"/><rect x="183.9" y="367.2" width="2" height="2" fill="#ff8c00" fill-opacity="0.8"/><rect x="160.9" y="370.0" width="2" height="2" fill="#ff8c00" fill-opacity="0.8"/><rect x="194.3" y="359.4" width="2" height="2" fill="#ff8c00" fill-opacity="0.8"/><rect x="169.3" y="368.1" width="2" height="2" fill="#ff8c00" fill-opacity="0.8"/><rect x="160.9" y="365.9" width="2" height="2" fill="#ff8c00" fill-opacity="0.8"/><rect x="165.1" y="360.8" width="2" height="2" fill="#ff8c00" fill-opacity="0.8"/><rect x="150.4" y="365.9" width="2" height="2" fill="#ff8c00" fill-opacity="0.8"/><rect x="173.4" y="375.9" width="2" height="2" fill="#ff8c00" fill-opacity="0.8"/><rect x="192.2" y="358.1" width="2" height="2" fill="#ff8c00" fill-opacity="0.8"/><rect x="152.5" y="374.1" width="2" height="2" fill="#ff8c00" fill-opacity="0.8"/><rect x="186.0" y="361.3" width="2" height="2" fill="#ff8c00" fill-opacity="0.8"/><rect x="192.2" y="350.3" width="2" height="2" fill="#ff8c00" fill-opacity="0.8"/><rect x="190.2" y="354.0" width="2" height="2" fill="#ff8c00" fill-opacity="0.8"/><rect x="200.6" y="348.9" width="2" height="2" fill="#ff8c00" fill-opacity="0.8"/><rect x="188.1" y="372.7" width="2" height="2" fill="#ff8c00" fill-opacity="0.8"/><rect x="194.3" y="345.7" width="2" height="2" fill="#ff8c00" fill-opacity="0.8"/><path d="M191.2 362.2l1.2 2h-2.4z" fill="#b040f0" fill-opacity="0.8"/><path d="M224.6 359.0l1.2 2h-2.4z" fill="#b040f0" fill-opacity="0.8"/><path d="M201.6 343.0l1.2 2h-2.4z" fill="#b040f0" fill-opacity="0.8"/><path d="M180.7 359.0l1.2 2h-2.4z" fill="#b040f0" fill-opacity="0.8"/><path d="M222.5 350.8l1.2 2h-2.4z" fill="#b040f0" fill-opacity="0.8"/><path d="M203.7 351.2l1.2 2h-2.4z" fill="#b040f0" fill-opacity="0.8"/><path d="M182.8 363.1l1.2 2h-2.4z" fill="#b040f0" fill-opacity="0.8"/><path d="M199.5 352.6l1.2 2h-2.4z" fill="#b040f0" fill-opacity="0.8"/><path d="M195.3 359.4l1.2 2h-2.4z" fill="#b040f0" fill-opacity="0.8"/><path d="M180.7 364.9l1.2 2h-2.4z" fill="#b040f0" fill-opacity="0.8"/><path d="M207.9 354.0l1.2 2h-2.4z" fill="#b040f0" fill-opacity="0.8"/><path d="M182.8 366.8l1.2 2h-2.4z" fill="#b040f0" fill-opacity="0.8"/><path d="M235.1 340.2l1.2 2h-2.4z" fill="#b040f0" fill-opacity="0.8"/><path d="M205.8 369.5l1.2 2h-2.4z" fill="#b040f0" fill-opacity="0.8"/><path d="M203.7 353.0l1.2 2h-2.4z" fill="#b040f0" fill-opacity="0.8"/><path d="M220.4 348.5l1.2 2h-2.4z" fill="#b040f0" fill-opacity="0.8"/><path d="M195.3 355.8l1.2 2h-2.4z" fill="#b040f0" fill-opacity="0.8"/><path d="M166.1 361.7l1.2 2h-2.4z" fill="#b040f0" fill-opacity="0.8"/><path d="M199.5 360.8l1.2 2h-2.4z" fill="#b040f0" fill-opacity="0.8"/><path d="M214.1 342.5l1.2 2h-2.4z" fill="#b040f0" fill-opacity="0.8"/><path d="M174.4 368.1l1.2 2h-2.4z" fill="#b040f0" fill-opacity="0.8"/><path d="M199.5 356.2l1.2 2h-2.4z" fill="#b040f0" fill-opacity="0.8"/><path d="M189.1 365.4l1.2 2h-2.4z" fill="#b040f0" fill-opacity="0.8"/><path d="M226.7 343.4l1.2 2h-2.4z" fill="#b040f0" fill-opacity="0.8"/><path d="M178.6 370.9l1.2 2h-2.4z" fill="#b040f0" fill-opacity="0.8"/><path d="M220.4 345.3l1.2 2h-2.4z" fill="#b040f0" fill-opacity="0.8"/><path d="M222.5 345.7l1.2 2h-2.4z" fill="#b040f0" fill-opacity="0.8"/><path d="M182.8 360.8l1.2 2h-2.4z" fill="#b040f0" fill-opacity="0.8"/><path d="M164.0 372.3l1.2 2h-2.4z" fill="#b040f0" fill-opacity="0.8"/><path d="M195.3 355.8l1.2 2h-2.4z" fill="#b040f0" fill-opacity="0.8"/><path d="M184.9 362.2l1.2 2h-2.4z" fill="#b040f0" fill-opacity="0.8"/><path d="M201.6 354.4l1.2 2h-2.4z" fill="#b040f0" fill-opacity="0.8"/><path d="M205.8 354.4l1.2 2h-2.4z" fill="#b040f0" fill-opacity="0.8"/><path d="M191.2 355.8l1.2 2h-2.4z" fill="#b040f0" fill-opacity="0.8"/><path d="M195.3 362.6l1.2 2h-2.4z" fill="#b040f0" fill-opacity="0.8"/><path d="M187.0 361.3l1.2 2h-2.4z" fill="#b040f0" fill-opacity="0.8"/><path d="M193.2 358.1l1.2 2h-2.4z" fill="#b040f0" fill-opacity="0.8"/><path d="M195.3 357.6l1.2 2h-2.4z" fill="#b040f0" fill-opacity="0.8"/><path d="M193.2 365.9l1.2 2h-2.4z" fill="#b040f0" fill-opacity="0.8"/><path d="M201.6 350.8l1.2 2h-2.4z" fill="#b040f0" fill-opacity="0.8"/><path d="M201.6 357.6l1.2 2h-2.4z" fill="#b040f0" fill-opacity="0.8"/><path d="M201.6 361.7l1.2 2h-2.4z" fill="#b040f0" fill-opacity="0.8"/><path d="M168.2 366.8l1.2 2h-2.4z" fill="#b040f0" fill-opacity="0.8"/><path d="M180.7 358.5l1.2 2h-2.4z" fill="#b040f0" fill-opacity="0.8"/><path d="M178.6 377.3l1.2 2h-2.4z" fill="#b040f0" fill-opacity="0.8"/><path d="M180.7 354.4l1.2 2h-2.4z" fill="#b040f0" fill-opacity="0.8"/><path d="M189.1 367.7l1.2 2h-2.4z" fill="#b040f0" fill-opacity="0.8"/><path d="M184.9 359.0l1.2 2h-2.4z" fill="#b040f0" fill-opacity="0.8"/><path d="M203.7 355.3l1.2 2h-2.4z" fill="#b040f0" fill-opacity="0.8"/><path d="M218.3 348.0l1.2 2h-2.4z" fill="#b040f0" fill-opacity="0.8"/><path d="M195.3 355.3l1.2 2h-2.4z" fill="#b040f0" fill-opacity="0.8"/><path d="M220.4 345.7l1.2 2h-2.4z" fill="#b040f0" fill-opacity="0.8"/><path d="M210.0 359.4l1.2 2h-2.4z" fill="#b040f0" fill-opacity="0.8"/><path d="M193.2 355.3l1.2 2h-2.4z" fill="#b040f0" fill-opacity="0.8"/><path d="M191.2 354.0l1.2 2h-2.4z" fill="#b040f0" fill-opacity="0.8"/><path d="M203.7 350.8l1.2 2h-2.4z" fill="#b040f0" fill-opacity="0.8"/><path d="M191.2 345.7l1.2 2h-2.4z" fill="#b040f0" fill-opacity="0.8"/><path d="M214.1 354.0l1.2 2h-2.4z" fill="#b040f0" fill-opacity="0.8"/><path d="M197.4 343.9l1.2 2h-2.4z" fill="#b040f0" fill-opacity="0.8"/><path d="M191.2 355.3l1.2 2h-2.4z" fill="#b040f0" fill-opacity="0.8"/><path d="M210.0 354.0l1.2 2h-2.4z" fill="#b040f0" fill-opacity="0.8"/><path d="M178.6 362.6l1.2 2h-2.4z" fill="#b040f0" fill-opacity="0.8"/><path d="M201.6 350.8l1.2 2h-2.4z" fill="#b040f0" fill-opacity="0.8"/><path d="M207.9 354.9l1.2 2h-2.4z" fill="#b040f0" fill-opacity="0.8"/><path d="M207.9 351.7l1.2 2h-2.4z" fill="#b040f0" fill-opacity="0.8"/><path d="M197.4 357.2l1.2 2h-2.4z" fill="#b040f0" fill-opacity="0.8"/><path d="M191.2 355.8l1.2 2h-2.4z" fill="#b040f0" fill-opacity="0.8"/><path d="M180.7 366.3l1.2 2h-2.4z" fill="#b040f0" fill-opacity="0.8"/><rect x="238.2" y="343.4" width="2" height="2" fill="#008b8b" fill-opacity="0.85"/><rect x="232.0" y="349.8" width="2" height="2" fill="#008b8b" fill-opacity="0.85"/><rect x="229.9" y="334.3" width="2" height="2" fill="#008b8b" fill-opacity="0.85"/><rect x="246.6" y="330.6" width="2" height="2" fill="#008b8b" fill-opacity="0.85"/><rect x="234.1" y="344.8" width="2" height="2" fill="#008b8b" fill-opacity="0.85"/><rect x="263.3" y="318.7" width="2" height="2" fill="#008b8b" fill-opacity="0.85"/><rect x="252.9" y="332.5" width="2" height="2" fill="#008b8b" fill-opacity="0.85"/><rect x="236.1" y="347.1" width="2" height="2" fill="#008b8b" fill-opacity="0.85"/><rect x="248.7" y="322.4" width="2" height="2" fill="#008b8b" fill-opacity="0.85"/><rect x="213.1" y="346.2" width="2" height="2" fill="#008b8b" fill-opacity="0.85"/><rect x="246.6" y="341.1" width="2" height="2" fill="#008b8b" fill-opacity="0.85"/><rect x="213.1" y="352.6" width="2" height="2" fill="#008b8b" fill-opacity="0.85"/><rect x="229.9" y="347.1" width="2" height="2" fill="#008b8b" fill-opacity="0.85"/><rect x="238.2" y="332.0" width="2" height="2" fill="#008b8b" fill-opacity="0.85"/><rect x="246.6" y="325.1" width="2" height="2" fill="#008b8b" fill-opacity="0.85"/><rect x="259.1" y="316.4" width="2" height="2" fill="#008b8b" fill-opacity="0.85"/><rect x="219.4" y="345.7" width="2" height="2" fill="#008b8b" fill-opacity="0.85"/><rect x="223.6" y="347.6" width="2" height="2" fill="#008b8b" fill-opacity="0.85"/><rect x="236.1" y="334.3" width="2" height="2" fill="#008b8b" fill-opacity="0.85"/><rect x="244.5" y="341.1" width="2" height="2" fill="#008b8b" fill-opacity="0.85"/><rect x="221.5" y="342.1" width="2" height="2" fill="#008b8b" fill-opacity="0.85"/><rect x="236.1" y="337.0" width="2" height="2" fill="#008b8b" fill-opacity="0.85"/><rect x="238.2" y="339.3" width="2" height="2" fill="#008b8b" fill-opacity="0.85"/><rect x="248.7" y="327.0" width="2" height="2" fill="#008b8b" fill-opacity="0.85"/><rect x="236.1" y="338.9" width="2" height="2" fill="#008b8b" fill-opacity="0.85"/><rect x="236.1" y="353.0" width="2" height="2" fill="#008b8b" fill-opacity="0.85"/><rect x="225.7" y="339.8" width="2" height="2" fill="#008b8b" fill-opacity="0.85"/><rect x="217.3" y="342.1" width="2" height="2" fill="#008b8b" fill-opacity="0.85"/><rect x="240.3" y="342.1" width="2" height="2" fill="#008b8b" fill-opacity="0.85"/><rect x="234.1" y="337.5" width="2" height="2" fill="#008b8b" fill-opacity="0.85"/><rect x="244.5" y="327.0" width="2" height="2" fill="#008b8b" fill-opacity="0.85"/><rect x="238.2" y="339.8" width="2" height="2" fill="#008b8b" fill-opacity="0.85"/><rect x="236.1" y="335.2" width="2" height="2" fill="#008b8b" fill-opacity="0.85"/><rect x="248.7" y="327.0" width="2" height="2" fill="#008b8b" fill-opacity="0.85"/><rect x="227.8" y="347.6" width="2" height="2" fill="#008b8b" fill-opacity="0.85"/><rect x="234.1" y="341.1" width="2" height="2" fill="#008b8b" fill-opacity="0.85"/><rect x="223.6" y="341.6" width="2" height="2" fill="#008b8b" fill-opacity="0.85"/><rect x="232.0" y="336.1" width="2" height="2" fill="#008b8b" fill-opacity="0.85"/><rect x="244.5" y="333.4" width="2" height="2" fill="#008b8b" fill-opacity="0.85"/><rect x="269.6" y="321.0" width="2" height="2" fill="#008b8b" fill-opacity="0.85"/><rect x="252.9" y="326.0" width="2" height="2" fill="#008b8b" fill-opacity="0.85"/><rect x="252.9" y="342.1" width="2" height="2" fill="#008b8b" fill-opacity="0.85"/><rect x="227.8" y="337.0" width="2" height="2" fill="#008b8b" fill-opacity="0.85"/><rect x="246.6" y="314.6" width="2" height="2" fill="#008b8b" fill-opacity="0.85"/><rect x="242.4" y="323.3" width="2" height="2" fill="#008b8b" fill-opacity="0.85"/><rect x="248.7" y="322.8" width="2" height="2" fill="#008b8b" fill-opacity="0.85"/><rect x="244.5" y="331.5" width="2" height="2" fill="#008b8b" fill-opacity="0.85"/><rect x="244.5" y="337.5" width="2" height="2" fill="#008b8b" fill-opacity="0.85"/><rect x="254.9" y="332.9" width="2" height="2" fill="#008b8b" fill-opacity="0.85"/><rect x="242.4" y="318.3" width="2" height="2" fill="#008b8b" fill-opacity="0.85"/><rect x="236.1" y="335.2" width="2" height="2" fill="#008b8b" fill-opacity="0.85"/><rect x="254.9" y="326.0" width="2" height="2" fill="#008b8b" fill-opacity="0.85"/><rect x="227.8" y="337.5" width="2" height="2" fill="#008b8b" fill-opacity="0.85"/><rect x="246.6" y="325.6" width="2" height="2" fill="#008b8b" fill-opacity="0.85"/><rect x="227.8" y="327.4" width="2" height="2" fill="#008b8b" fill-opacity="0.85"/><rect x="261.2" y="322.8" width="2" height="2" fill="#008b8b" fill-opacity="0.85"/><rect x="242.4" y="334.7" width="2" height="2" fill="#008b8b" fill-opacity="0.85"/><rect x="257.0" y="329.3" width="2" height="2" fill="#008b8b" fill-opacity="0.85"/><rect x="246.6" y="332.5" width="2" height="2" fill="#008b8b" fill-opacity="0.85"/><rect x="227.8" y="333.4" width="2" height="2" fill="#008b8b" fill-opacity="0.85"/><rect x="257.0" y="325.1" width="2" height="2" fill="#008b8b" fill-opacity="0.85"/><rect x="229.9" y="332.9" width="2" height="2" fill="#008b8b" fill-opacity="0.85"/><rect x="238.2" y="332.0" width="2" height="2" fill="#008b8b" fill-opacity="0.85"/><rect x="259.1" y="316.4" width="2" height="2" fill="#008b8b" fill-opacity="0.85"/><rect x="232.0" y="321.9" width="2" height="2" fill="#008b8b" fill-opacity="0.85"/><rect x="238.2" y="328.8" width="2" height="2" fill="#008b8b" fill-opacity="0.85"/><rect x="229.9" y="338.4" width="2" height="2" fill="#008b8b" fill-opacity="0.85"/><rect x="215.2" y="333.4" width="2" height="2" fill="#008b8b" fill-opacity="0.85"/><rect x="257.0" y="332.9" width="2" height="2" fill="#008b8b" fill-opacity="0.85"/><rect x="217.3" y="354.4" width="2" height="2" fill="#008b8b" fill-opacity="0.85"/><rect x="254.9" y="329.3" width="2" height="2" fill="#008b8b" fill-opacity="0.85"/><rect x="238.2" y="336.1" width="2" height="2" fill="#008b8b" fill-opacity="0.85"/><rect x="236.1" y="341.6" width="2" height="2" fill="#008b8b" fill-opacity="0.85"/><rect x="238.2" y="343.0" width="2" height="2" fill="#008b8b" fill-opacity="0.85"/><rect x="238.2" y="332.5" width="2" height="2" fill="#008b8b" fill-opacity="0.85"/><rect x="244.5" y="332.5" width="2" height="2" fill="#008b8b" fill-opacity="0.85"/><rect x="225.7" y="338.4" width="2" height="2" fill="#008b8b" fill-opacity="0.85"/><rect x="232.0" y="326.5" width="2" height="2" fill="#008b8b" fill-opacity="0.85"/><rect x="248.7" y="329.7" width="2" height="2" fill="#008b8b" fill-opacity="0.85"/><rect x="232.0" y="341.6" width="2" height="2" fill="#008b8b" fill-opacity="0.85"/><rect x="225.7" y="342.1" width="2" height="2" fill="#008b8b" fill-opacity="0.85"/><rect x="242.4" y="328.3" width="2" height="2" fill="#008b8b" fill-opacity="0.85"/><rect x="246.6" y="316.4" width="2" height="2" fill="#008b8b" fill-opacity="0.85"/><rect x="227.8" y="338.4" width="2" height="2" fill="#008b8b" fill-opacity="0.85"/><rect x="275.9" y="327.9" width="2" height="2" fill="#008b8b" fill-opacity="0.85"/><rect x="232.0" y="336.1" width="2" height="2" fill="#008b8b" fill-opacity="0.85"/><rect x="240.3" y="330.2" width="2" height="2" fill="#008b8b" fill-opacity="0.85"/><rect x="234.1" y="332.9" width="2" height="2" fill="#008b8b" fill-opacity="0.85"/><rect x="238.2" y="328.3" width="2" height="2" fill="#008b8b" fill-opacity="0.85"/><rect x="213.1" y="351.7" width="2" height="2" fill="#008b8b" fill-opacity="0.85"/><rect x="238.2" y="340.7" width="2" height="2" fill="#008b8b" fill-opacity="0.85"/><rect x="223.6" y="336.6" width="2" height="2" fill="#008b8b" fill-opacity="0.85"/><rect x="229.9" y="333.8" width="2" height="2" fill="#008b8b" fill-opacity="0.85"/><rect x="248.7" y="327.0" width="2" height="2" fill="#008b8b" fill-opacity="0.85"/><rect x="244.5" y="331.1" width="2" height="2" fill="#008b8b" fill-opacity="0.85"/><rect x="219.4" y="343.0" width="2" height="2" fill="#008b8b" fill-opacity="0.85"/><rect x="244.5" y="334.3" width="2" height="2" fill="#008b8b" fill-opacity="0.85"/><rect x="236.1" y="329.7" width="2" height="2" fill="#008b8b" fill-opacity="0.85"/><rect x="225.7" y="335.2" width="2" height="2" fill="#008b8b" fill-opacity="0.85"/><rect x="263.3" y="325.6" width="2" height="2" fill="#008b8b" fill-opacity="0.85"/><rect x="240.3" y="333.8" width="2" height="2" fill="#008b8b" fill-opacity="0.85"/><rect x="259.1" y="321.9" width="2" height="2" fill="#008b8b" fill-opacity="0.85"/><rect x="250.8" y="332.5" width="2" height="2" fill="#008b8b" fill-opacity="0.85"/><rect x="238.2" y="333.8" width="2" height="2" fill="#008b8b" fill-opacity="0.85"/><rect x="213.1" y="335.7" width="2" height="2" fill="#008b8b" fill-opacity="0.85"/><rect x="250.8" y="339.3" width="2" height="2" fill="#008b8b" fill-opacity="0.85"/><rect x="248.7" y="329.7" width="2" height="2" fill="#008b8b" fill-opacity="0.85"/><rect x="244.5" y="328.3" width="2" height="2" fill="#008b8b" fill-opacity="0.85"/><rect x="217.3" y="344.8" width="2" height="2" fill="#008b8b" fill-opacity="0.85"/><rect x="259.1" y="327.9" width="2" height="2" fill="#008b8b" fill-opacity="0.85"/><rect x="223.6" y="349.4" width="2" height="2" fill="#008b8b" fill-opacity="0.85"/><rect x="221.5" y="339.3" width="2" height="2" fill="#008b8b" fill-opacity="0.85"/><rect x="261.2" y="320.1" width="2" height="2" fill="#008b8b" fill-opacity="0.85"/><rect x="242.4" y="317.4" width="2" height="2" fill="#008b8b" fill-opacity="0.85"/><rect x="232.0" y="341.6" width="2" height="2" fill="#008b8b" fill-opacity="0.85"/><rect x="244.5" y="327.0" width="2" height="2" fill="#008b8b" fill-opacity="0.85"/><rect x="223.6" y="348.0" width="2" height="2" fill="#008b8b" fill-opacity="0.85"/><rect x="242.4" y="330.2" width="2" height="2" fill="#008b8b" fill-opacity="0.85"/><rect x="221.5" y="343.4" width="2" height="2" fill="#008b8b" fill-opacity="0.85"/><rect x="229.9" y="334.3" width="2" height="2" fill="#008b8b" fill-opacity="0.85"/><rect x="236.1" y="335.2" width="2" height="2" fill="#008b8b" fill-opacity="0.85"/><rect x="234.1" y="329.3" width="2" height="2" fill="#008b8b" fill-opacity="0.85"/><rect x="257.0" y="327.4" width="2" height="2" fill="#008b8b" fill-opacity="0.85"/><rect x="150" y="319" width="28" height="22" fill="#fff"/><text x="154" y="324.2" font-size="3.1" font-family="Liberation Sans" fill="#333">Penguin species</text><rect x="156" y="327.5" width="1.6" height="1.6" fill="#ff8c00"/><rect x="160.5" y="327.8" width="7" height="1" fill="#888"/><rect x="156" y="332.5" width="1.6" height="1.6" fill="#a020f0"/><rect x="160.5" y="332.8" width="8" height="1" fill="#888"/><rect x="156" y="337.5" width="1.6" height="1.6" fill="#008b8b"/><rect x="160.5" y="337.8" width="6" height="1" fill="#888"/><text x="129" y="302.8" font-size="3.75" font-family="Liberation Sans" fill="#333">Penguin size, Palmer Station LTER</text><text x="129" y="307.6" font-size="3.2" font-family="Liberation Sans" fill="#444">Flipper length and body mass for Adelie, Chinstrap and Gentoo Penguins</text><rect x="138.5" y="385" width="5" height="1.2" fill="#999"/><rect x="159.4" y="385" width="5" height="1.2" fill="#999"/><rect x="180.3" y="385" width="5" height="1.2" fill="#999"/><rect x="201.2" y="385" width="5" height="1.2" fill="#999"/><rect x="222.1" y="385" width="5" height="1.2" fill="#999"/><rect x="243.0" y="385" width="5" height="1.2" fill="#999"/><rect x="263.9" y="385" width="5" height="1.2" fill="#999"/><rect x="192" y="388" width="19" height="1.2" fill="#888"/><rect x="131" y="317.4" width="5" height="1.2" fill="#999"/><rect x="131" y="335.9" width="5" height="1.2" fill="#999"/><rect x="131" y="354.2" width="5" height="1.2" fill="#999"/><rect x="131" y="372.4" width="5" height="1.2" fill="#999"/><rect x="129" y="330" width="1.2" height="20" fill="#888"/></svg>
<svg class="a" style="left:0;top:0" width="1999" height="1143" viewBox="0 0 1999 1143"><path d="M1145.8 41.8 v-2 a2.5 2.5 0 0 1 2.5 -2.5 h14.5 a2.5 2.5 0 0 1 2.5 2.5 v2 z" fill="#8b969f"/><rect x="1145.8" y="37.5" width="19.5" height="8" rx="2.5" fill="none" stroke="#8b969f" stroke-width="1.6"/><rect x="1172.8" y="28.8" width="19.5" height="16.5" rx="2.5" fill="none" stroke="#8b969f" stroke-width="1.6"/><rect x="1172.8" y="28.8" width="19.5" height="3.6" rx="1.5" fill="#8b969f"/><rect x="1172.8" y="30.8" width="19.5" height="1.6" fill="#8b969f"/><path d="M1145.8 690.8 v-2 a2.5 2.5 0 0 1 2.5 -2.5 h14.5 a2.5 2.5 0 0 1 2.5 2.5 v2 z" fill="#8b969f"/><rect x="1145.8" y="686.5" width="19.5" height="8" rx="2.5" fill="none" stroke="#8b969f" stroke-width="1.6"/><rect x="1172.8" y="677.8" width="19.5" height="16.5" rx="2.5" fill="none" stroke="#8b969f" stroke-width="1.6"/><rect x="1172.8" y="677.8" width="19.5" height="3.6" rx="1.5" fill="#8b969f"/><rect x="1172.8" y="679.8" width="19.5" height="1.6" fill="#8b969f"/><path d="M1929.8 41.8 v-2 a2.5 2.5 0 0 1 2.5 -2.5 h14.5 a2.5 2.5 0 0 1 2.5 2.5 v2 z" fill="#8b969f"/><rect x="1929.8" y="37.5" width="19.5" height="8" rx="2.5" fill="none" stroke="#8b969f" stroke-width="1.6"/><rect x="1956.8" y="28.8" width="19.5" height="16.5" rx="2.5" fill="none" stroke="#8b969f" stroke-width="1.6"/><rect x="1956.8" y="28.8" width="19.5" height="3.6" rx="1.5" fill="#8b969f"/><rect x="1956.8" y="30.8" width="19.5" height="1.6" fill="#8b969f"/><path d="M1929.8 451.8 v-2 a2.5 2.5 0 0 1 2.5 -2.5 h14.5 a2.5 2.5 0 0 1 2.5 2.5 v2 z" fill="#8b969f"/><rect x="1929.8" y="447.5" width="19.5" height="8" rx="2.5" fill="none" stroke="#8b969f" stroke-width="1.6"/><rect x="1956.8" y="438.8" width="19.5" height="16.5" rx="2.5" fill="none" stroke="#8b969f" stroke-width="1.6"/><rect x="1956.8" y="438.8" width="19.5" height="3.6" rx="1.5" fill="#8b969f"/><rect x="1956.8" y="440.8" width="19.5" height="1.6" fill="#8b969f"/><path d="M30 23.5h12.5l6 6v15h-18.5z" fill="#e9e9e9"/><path d="M42.5 23.5v6h6" fill="#c9c9c9"/><circle cx="34.3" cy="32.4" r="7.4" fill="#b8285a"/><text x="34.3" y="34.6" font-size="6" font-family="Liberation Sans" font-weight="bold" fill="#f6dce6" text-anchor="middle">Rmd</text><path d="M145.5 31l9 8.5M154.5 31l-9 8.5" stroke="#7e8993" stroke-width="2.6"/><path d="M27.5 69l10.5 -8.5v4.5h10.5v9h-10.5v4.5z" fill="#dcdcdc"/><path d="M74 69l-10.5 -8.5v4.5h-10.5v9h10.5v4.5z" fill="#77838d"/><path d="M85.7 55 Q87.9 66.5 85.7 78 Q83.5 66.5 85.7 55 z" fill="#07090c"/><path d="M131.8 55 Q134.0 66.5 131.8 78 Q129.60000000000002 66.5 131.8 55 z" fill="#07090c"/><rect x="104" y="61" width="15.5" height="15" rx="2" fill="#e2e2e2"/><rect x="104" y="61" width="15.5" height="3" rx="1.5" fill="#b9d3e8"/><path d="M99 75l7 -7M102 67.5h4.5v4.5" stroke="#d8d8d8" stroke-width="2" fill="none"/><rect x="146.5" y="60" width="18.5" height="18" rx="1.5" fill="#5a9bd5"/><rect x="148.5" y="61.5" width="14.5" height="6" fill="#f0f0f0"/><rect x="150" y="71" width="11" height="7" fill="#f0f0f0"/><rect x="152.5" y="73" width="3.5" height="5" fill="#5a9bd5"/><rect x="183.5" y="59.3" width="16.5" height="16.7" rx="3.5" fill="#d3d8df" stroke="#2f3a44" stroke-width="0.8"/><path d="M318.3 55 Q320.5 66.5 318.3 78 Q316.1 66.5 318.3 55 z" fill="#07090c"/><text x="342.5" y="65.6" font-size="9.5" font-family="Liberation Serif" font-weight="bold" fill="#8b959d" text-anchor="middle">ABC</text><path d="M337 74l4 4.5 7.5 -9.5" stroke="#12a028" stroke-width="2.3" fill="none"/><circle cx="375.6" cy="63.8" r="6" fill="#d6e4f0" stroke="#9fb3c4" stroke-width="1"/><path d="M380 68.5l7.5 8" stroke="#b8702e" stroke-width="3.2" stroke-linecap="round"/><path d="M400 55 Q402.2 66.5 400 78 Q397.8 66.5 400 55 z" fill="#07090c"/><circle cx="425" cy="70.5" r="8.5" fill="#3457b8"/><path d="M419 67c4 -2 8 -1 12 2M418 71c4 -2 9 -1 13 2M421 76c3 -2 6 -2 9 0" stroke="#6f8fe0" stroke-width="1" fill="none"/><path d="M427 66.5l10 -9.5" stroke="#cfcfcf" stroke-width="2"/><path d="M411 78.5c2 -3 6 -1 5 -4c-1 -2 3 -3 5 -2" stroke="#3457b8" stroke-width="1.2" fill="none"/><path d="M493 67.5h8l-4 4.5z" fill="#d9d9d9"/><polygon points="527.80,58.90 529.61,59.08 530.33,62.10 531.47,62.71 534.38,61.62 535.53,63.03 533.90,65.67 534.27,66.91 537.10,68.20 536.92,70.01 533.90,70.73 533.29,71.87 534.38,74.78 532.97,75.93 530.33,74.30 529.09,74.67 527.80,77.50 525.99,77.32 525.27,74.30 524.13,73.69 521.22,74.78 520.07,73.37 521.70,70.73 521.33,69.49 518.50,68.20 518.68,66.39 521.70,65.67 522.31,64.53 521.22,61.62 522.63,60.47 525.27,62.10 526.51,61.73" fill="#e9e9e9" stroke="#e9e9e9" stroke-width="0.8" stroke-linejoin="round"/><circle cx="527.8" cy="68.2" r="3" fill="#4b5c69"/><path d="M550 67.5h8l-4 4.5z" fill="#d9d9d9"/><rect x="814.4" y="60.2" width="16.5" height="17.5" rx="2.5" fill="#4fae5a"/><text x="823" y="75.5" font-size="15" font-family="Liberation Serif" font-weight="bold" fill="#f2f2f2" text-anchor="middle">C</text><circle cx="810.8" cy="62.6" r="6" fill="#f2f2f2"/><path d="M807 62.6h7.6M810.8 58.8v7.6" stroke="#10a020" stroke-width="2.6"/><path d="M841 67.5h8l-4 4.5z" fill="#d9d9d9"/><path d="M854.6 55 Q856.8000000000001 66.5 854.6 78 Q852.4 66.5 854.6 55 z" fill="#07090c"/><path d="M879.2 59.6l8.4 8.9h-5v9.1h-6.8v-9.1h-5z" fill="#e6e6e6"/><path d="M915 77.6l8.4 -8.9h-5v-9.1h-6.8v9.1h-5z" fill="#e6e6e6"/><path d="M936.9 55 Q939.1 66.5 936.9 78 Q934.6999999999999 66.5 936.9 55 z" fill="#07090c"/><rect x="949" y="59" width="16" height="17.4" rx="2.5" fill="#e4e4e4"/><rect x="951" y="66" width="10" height="4.5" fill="#8db6e6"/><path d="M962 64.5h6v-3.5l8.5 6.5l-8.5 6.5v-3.5h-6z" fill="#04a050"/><path d="M1021 67.5h8l-4 4.5z" fill="#d9d9d9"/><path d="M1041.2 55 Q1043.4 66.5 1041.2 78 Q1039.0 66.5 1041.2 55 z" fill="#07090c"/><circle cx="1065.7" cy="68.5" r="3.6" fill="#0b8ad6"/><path d="M1054 67.5h4.5a8 8 0 0 1 12.5 -6M1078 70h-4.5a8 8 0 0 1 -12.5 6" stroke="#0b8ad6" stroke-width="2.6" fill="none"/><path d="M1086.5 67.3h8l-4 4.5z" fill="#d9d9d9"/><path d="M1106.8 55 Q1109.0 66.5 1106.8 78 Q1104.6 66.5 1106.8 55 z" fill="#07090c"/><line x1="1122" y1="61.5" x2="1134" y2="61.5" stroke="#8e8e8e" stroke-width="1.4"/><line x1="1127" y1="64.5" x2="1139" y2="64.5" stroke="#8e8e8e" stroke-width="1.4"/><line x1="1127" y1="67.5" x2="1139" y2="67.5" stroke="#8e8e8e" stroke-width="1.4"/><line x1="1122" y1="70.5" x2="1134" y2="70.5" stroke="#8e8e8e" stroke-width="1.4"/><line x1="1127" y1="74" x2="1139" y2="74" stroke="#8e8e8e" stroke-width="1.4"/><path d="M1154.5 55 Q1156.7 66.5 1154.5 78 Q1152.3 66.5 1154.5 55 z" fill="#07090c"/><circle cx="1182" cy="62" r="2" fill="none" stroke="#8f8f8f" stroke-width="1.2"/><path d="M1182 58v2M1181 64l-5.5 13M1183 64l5.5 13M1176.5 72.5h11" stroke="#8f8f8f" stroke-width="1.2" fill="none"/><rect x="1234.5" y="59.5" width="15.5" height="16.5" rx="1.5" fill="#e3e3e3"/><rect x="1237" y="62" width="10.5" height="3.5" fill="#e09a9a"/><rect x="1237" y="67.5" width="10.5" height="3.5" fill="#5cc070"/><path d="M1306.5 55 Q1308.7 66.5 1306.5 78 Q1304.3 66.5 1306.5 55 z" fill="#07090c"/><rect x="1325" y="56" width="14" height="17" fill="#d8d8d8" stroke="#aaa" stroke-width="0.6"/><rect x="1320" y="60" width="14" height="16" fill="#e6e6e6" stroke="#aaa" stroke-width="0.6"/><path d="M1323 69l3 3.5 5.5 -8" stroke="#139b28" stroke-width="1.8" fill="none"/><path d="M1428.9 55 Q1431.1000000000001 66.5 1428.9 78 Q1426.7 66.5 1428.9 55 z" fill="#07090c"/><path d="M1449.5 57h7v9h4.8l-8.3 9.6l-8.3 -9.6h4.8z" fill="#1fb1c9"/><path d="M1474 67.3h8l-4 4.5z" fill="#d9d9d9"/><path d="M1488 55 Q1490.2 66.5 1488 78 Q1485.8 66.5 1488 55 z" fill="#07090c"/><path d="M1512.5 57l9.2 9.8h-5.3v9.7h-7.8v-9.7h-5.3z" fill="#0dbd5c"/><path d="M1534.3 55 Q1536.5 66.5 1534.3 78 Q1532.1 66.5 1534.3 55 z" fill="#07090c"/><circle cx="1559.8" cy="67.4" r="9.3" fill="#dedede"/><path d="M1560 60v7.5h5" stroke="#111" stroke-width="1.5" fill="none"/><path d="M1560 67.5l-5.5 5.5" stroke="#e05a6a" stroke-width="1"/><path d="M1580.6 55 Q1582.8 66.5 1580.6 78 Q1578.3999999999999 66.5 1580.6 55 z" fill="#07090c"/><polygon points="1605.40,58.00 1607.45,58.20 1608.27,61.57 1609.57,62.26 1612.82,61.08 1614.13,62.67 1612.33,65.63 1612.76,67.04 1615.90,68.50 1615.70,70.55 1612.33,71.37 1611.64,72.67 1612.82,75.92 1611.23,77.23 1608.27,75.43 1606.86,75.86 1605.40,79.00 1603.35,78.80 1602.53,75.43 1601.23,74.74 1597.98,75.92 1596.67,74.33 1598.47,71.37 1598.04,69.96 1594.90,68.50 1595.10,66.45 1598.47,65.63 1599.16,64.33 1597.98,61.08 1599.57,59.77 1602.53,61.57 1603.94,61.14" fill="#2ab0d6" stroke="#2ab0d6" stroke-width="0.8" stroke-linejoin="round"/><circle cx="1605.4" cy="68.5" r="3.5" fill="#4b5c69"/><path d="M1627 67.3h8l-4 4.5z" fill="#d9d9d9"/><rect x="1776" y="58.6" width="9.7" height="7.5" fill="#b48fd0" stroke="#8d63ad" stroke-width="0.8"/><rect x="1787.4" y="70.1" width="10.4" height="7.5" fill="#b48fd0" stroke="#8d63ad" stroke-width="0.8"/><path d="M1780.5 66v3.5M1784.5 73.6h3" stroke="#c9b4dc" stroke-width="1"/><path d="M1780.5 69.5l4 4 -4 4 -4 -4z" fill="#eeeeee"/><path d="M1807.6 55 Q1809.8 66.5 1807.6 78 Q1805.3999999999999 66.5 1807.6 55 z" fill="#07090c"/><path d="M1917 67.3h8l-4 4.5z" fill="#d9d9d9"/><path d="M1937.3 55 Q1939.5 66.5 1937.3 78 Q1935.1 66.5 1937.3 55 z" fill="#07090c"/><g transform="translate(0 0)"><path d="M1964.2 74.2 A8 8 0 1 1 1964.6 63.4" stroke="#d5dce6" stroke-width="5.3" fill="none"/><path d="M1968 57.9V67.4H1959z" fill="#d5dce6"/></g><path d="M1976.7 67.3h8l-4 4.5z" fill="#d9d9d9"/><line x1="1287" y1="84.5" x2="1287" y2="107" stroke="#1c2a36" stroke-width="1.6"/><line x1="1370.3" y1="84.5" x2="1370.3" y2="107" stroke="#1c2a36" stroke-width="1.6"/><path d="M1377 98.5l5.5 -5.5 5.5 5.5z" fill="#3b4650"/><rect x="1236" y="473.5" width="17.5" height="15.5" fill="#e9e9e9"/><circle cx="1235.5" cy="475.5" r="6.5" fill="#d01818" stroke="#f2f2f2" stroke-width="0.8"/><path d="M1232.7 472.7l5.6 5.6M1238.3 472.7l-5.6 5.6" stroke="#fff" stroke-width="1.8"/><path d="M1265 465 Q1267.2 477.0 1265 489 Q1262.8 477.0 1265 465 z" fill="#07090c"/><path d="M1297 467l-8 10" stroke="#a05050" stroke-width="1.5"/><path d="M1285 474l6 5 -6 10c-3 -1 -6 -2 -9 -3z" fill="#807a5a"/><path d="M1305 465 Q1307.2 477.0 1305 489 Q1302.8 477.0 1305 465 z" fill="#07090c"/><rect x="1326" y="471" width="13.5" height="14" rx="2" fill="#6e7c88"/><path d="M1318.5 485.5l6 -6M1320.5 479h4.5v4.5" stroke="#6e7c88" stroke-width="1.8" fill="none"/><g transform="translate(13.5 409.9)"><path d="M1964.2 74.2 A8 8 0 1 1 1964.6 63.4" stroke="#7b8893" stroke-width="5.3" fill="none"/><path d="M1968 57.9V67.4H1959z" fill="#7b8893"/></g><path d="M199 679l9 8.5M208 679l-9 8.5" stroke="#6f7c87" stroke-width="2.3"/><path d="M281.5 679l9 8.5M290.5 679l-9 8.5" stroke="#6f7c87" stroke-width="2.3"/><ellipse cx="37" cy="716.5" rx="11" ry="7.6" fill="none" stroke="#c4c9cf" stroke-width="4"/><text x="42.5" y="727.5" font-size="17" font-weight="bold" font-family="Liberation Sans" fill="#1e7fe6" stroke="#1e7fe6" stroke-width="0.8" text-anchor="middle">R</text><circle cx="143.5" cy="718" r="1.2" fill="#9aa4ad"/><path d="M242.5 722.5c1 -6 6 -9 11 -8.5v-4l6 6.5 -6 6.5v-4c-4 -0.5 -8 1 -11 3.5z" fill="#d5d9dd"/><path d="M1196 706.5l-10.5 10.5" stroke="#c9c9c9" stroke-width="1.6"/><path d="M1183 714.5l6 5 -7 7c-3 -1 -6 -1.5 -9.5 -1.5z" fill="#c9c9c9"/><rect x="13" y="630" width="84" height="23" fill="none"/><line x1="98" y1="630" x2="98" y2="653" stroke="#1c2a36" stroke-width="2"/><line x1="1074" y1="630" x2="1074" y2="653" stroke="#1c2a36" stroke-width="2"/><rect x="104" y="635" width="17" height="15" rx="1.5" fill="#12b812"/><text x="112.5" y="647.5" font-size="13" font-family="Liberation Sans" font-weight="bold" fill="#f4f4f4" text-anchor="middle">C</text><path d="M204 641l4 -4.5 4 4.5zM204 644l4 4.5 4 -4.5z" fill="#8e8378"/><path d="M1190 641l4 -4.5 4 4.5zM1190 644l4 4.5 4 -4.5z" fill="#8e8378"/><path d="M76 246.5l4 -4.5 4 4.5z" fill="#8a8a8a"/></svg></div></body></html>
